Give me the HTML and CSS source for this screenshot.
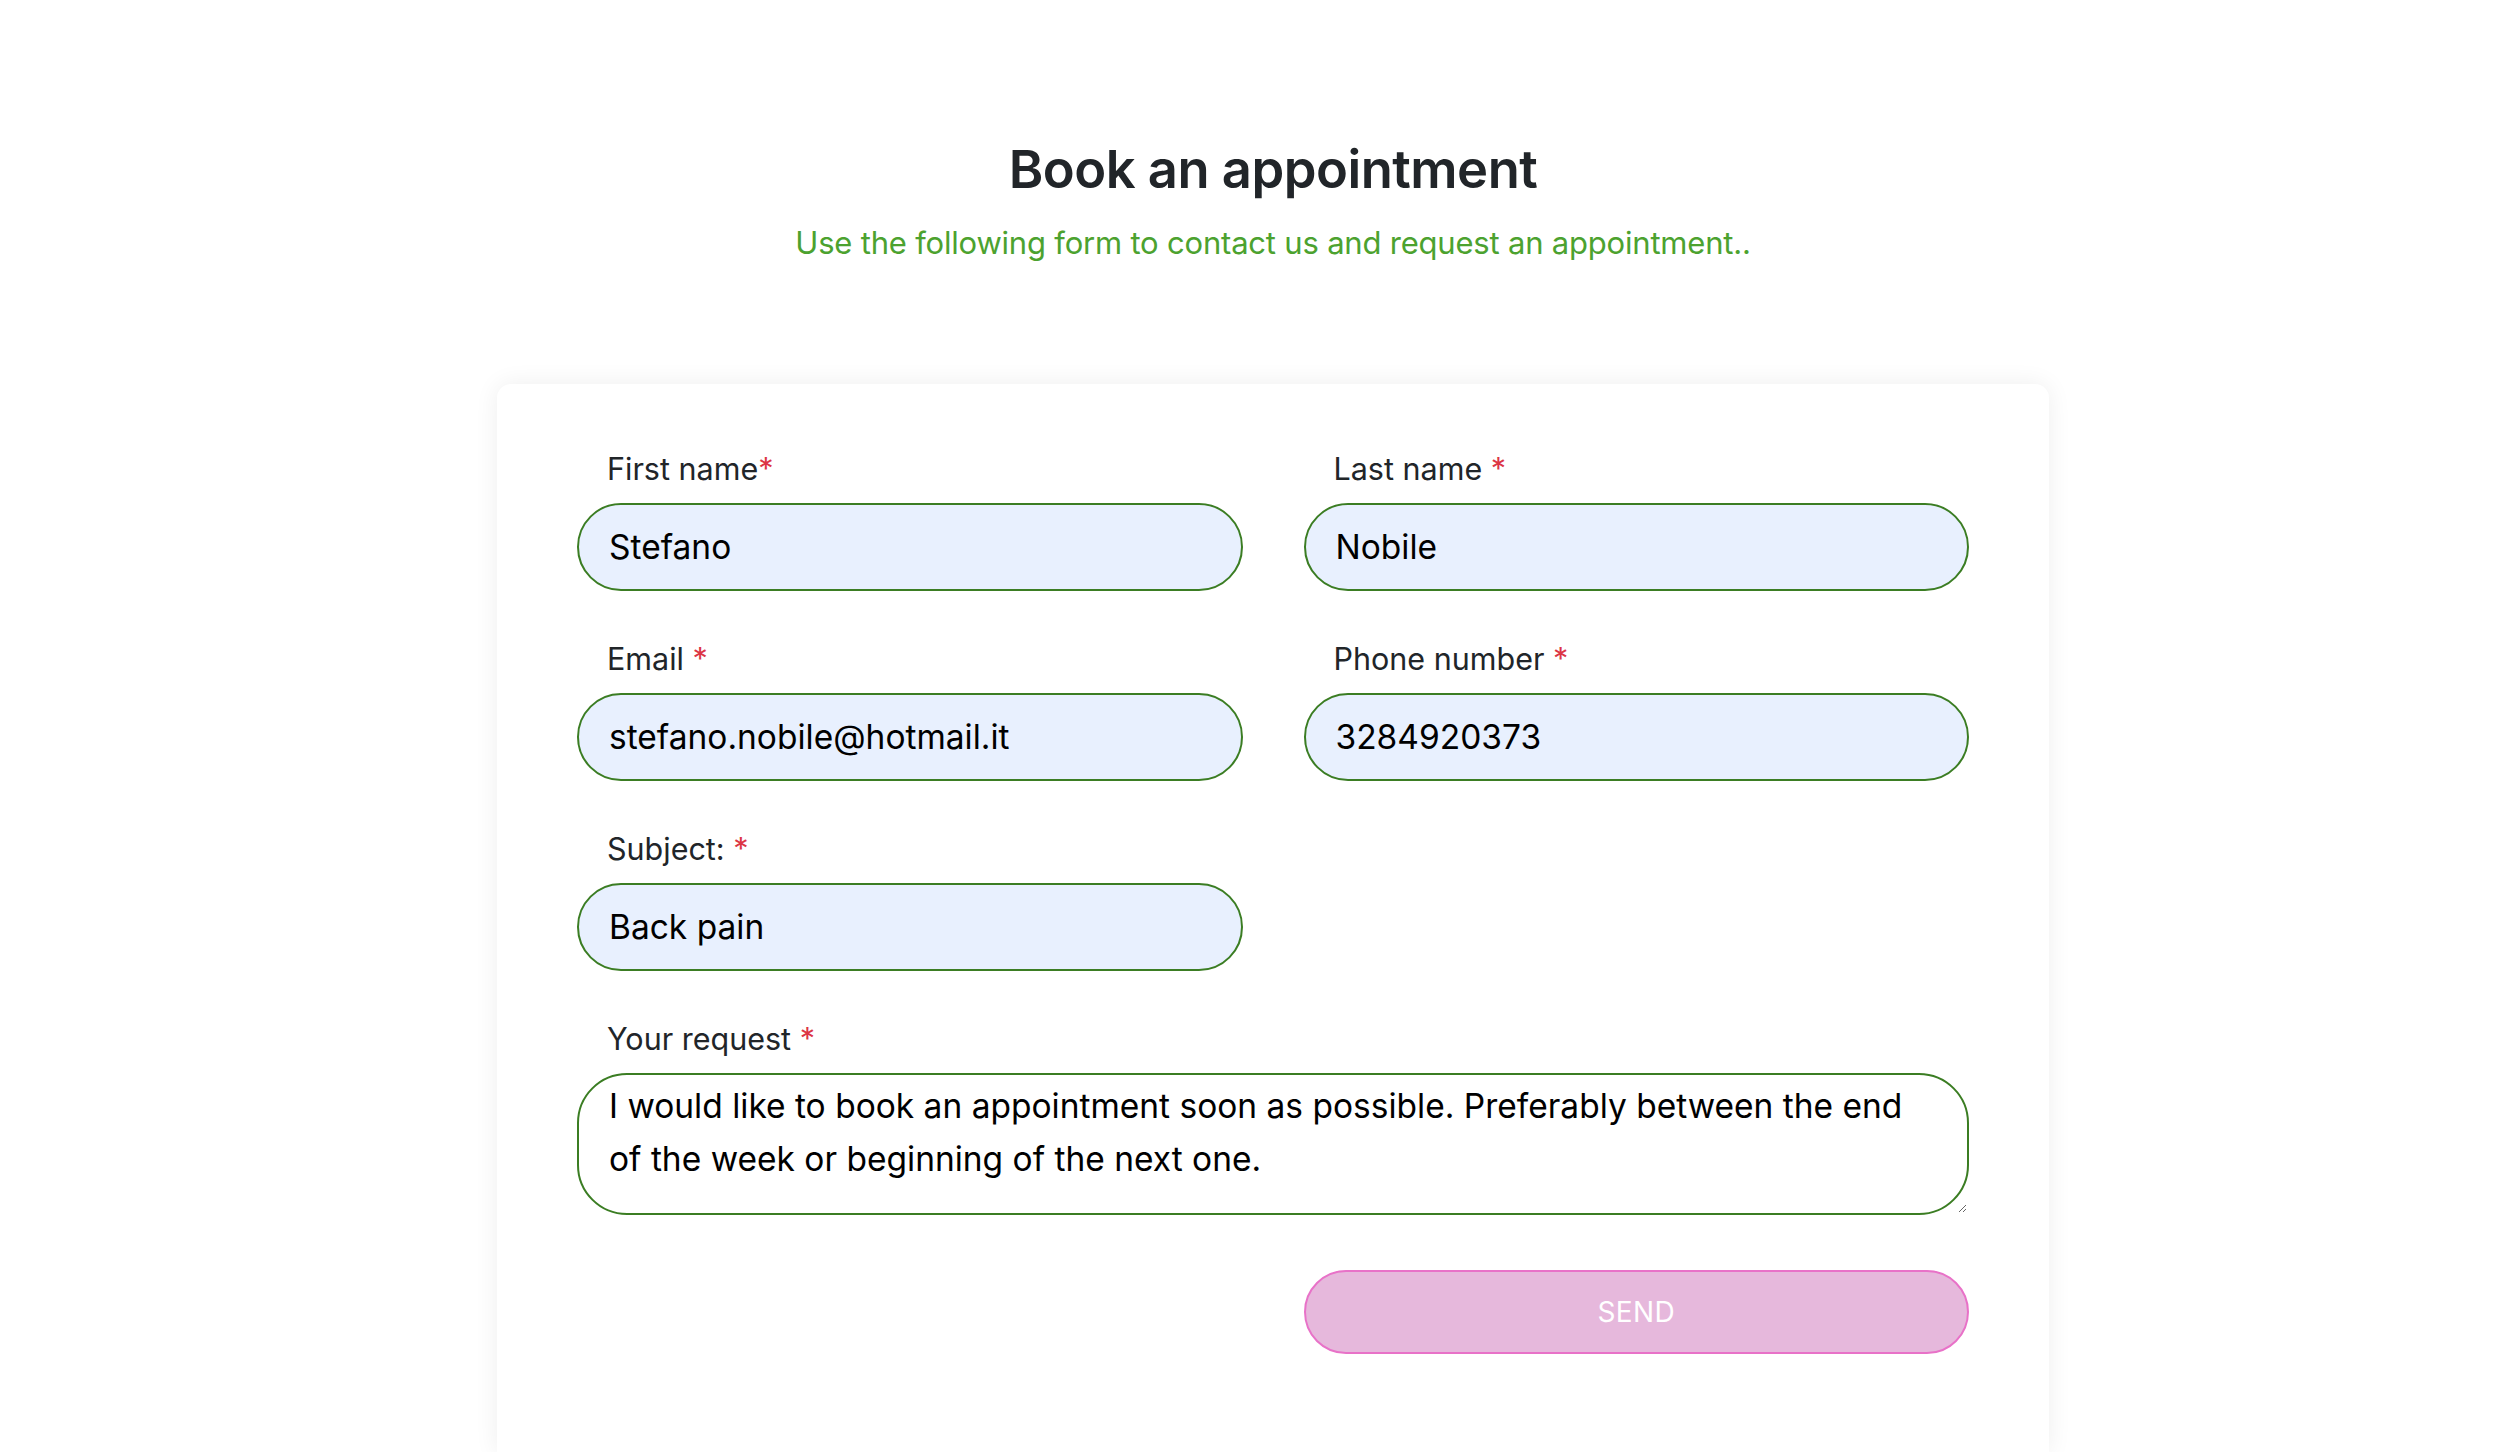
FILE: index.html
```html
<!DOCTYPE html>
<html lang="en">
<head>
<meta charset="utf-8">
<title>Book an appointment</title>
<link rel="stylesheet" href="styles.css">
</head>
<body>
<main class="page">
  <header class="intro">
    <h1 class="title">Book an appointment</h1>
    <p class="subtitle">Use the following form to contact us and request an appointment..</p>
  </header>
  <form class="card">
    <div class="grid">
      <div class="field">
        <label class="label" for="fn">First name<span class="req">*</span></label>
        <input class="input autofilled" id="fn" type="text" value="Stefano">
      </div>
      <div class="field">
        <label class="label" for="ln">Last name <span class="req">*</span></label>
        <input class="input autofilled" id="ln" type="text" value="Nobile">
      </div>
      <div class="field">
        <label class="label" for="em">Email <span class="req">*</span></label>
        <input class="input autofilled" id="em" type="text" value="stefano.nobile@hotmail.it">
      </div>
      <div class="field">
        <label class="label" for="ph">Phone number <span class="req">*</span></label>
        <input class="input autofilled" id="ph" type="text" value="3284920373">
      </div>
      <div class="field">
        <label class="label" for="sb">Subject: <span class="req">*</span></label>
        <input class="input autofilled" id="sb" type="text" value="Back pain">
      </div>
      <div class="field full">
        <label class="label" for="rq">Your request <span class="req">*</span></label>
        <textarea class="input textarea" id="rq">I would like to book an appointment soon as possible. Preferably between the end of the week or beginning of the next one.</textarea>
      </div>
      <div class="actions">
        <button class="send" type="button">SEND</button>
      </div>
    </div>
  </form>
</main>
</body>
</html>
```

FILE: styles.css
```css
* { box-sizing: border-box; }

html, body {
  margin: 0;
  background: #ffffff;
}

body {
  font-family: Inter, "Noto Sans", "Liberation Sans", sans-serif;
  color: #212529;
  padding-left: 26px;
}

.page {
  width: 1552px;
  margin: 0 auto;
}

.intro {
  text-align: center;
  padding-top: 138px;
}

.title {
  margin: 0;
  font-size: 52.5px;
  line-height: 62px;
  font-weight: 600;
  letter-spacing: -0.5px;
  color: #212529;
}

.subtitle {
  margin: 19px 0 0;
  font-size: 31px;
  line-height: 48px;
  color: #4ca22f;
  letter-spacing: -0.2px;
}

.card {
  margin-top: 117px;
  background: #fff;
  border-radius: 14px 14px 0 0;
  box-shadow: 0 0 24px rgba(0, 0, 0, 0.07);
  padding: 62px 80px 99px;
}

.grid {
  display: grid;
  grid-template-columns: 1fr 1fr;
  column-gap: 61px;
  row-gap: 45px;
}

.field {
  display: flex;
  flex-direction: column;
  gap: 12px;
}

.full { grid-column: 1 / -1; }

.actions {
  grid-column: 2;
  padding-top: 10px;
}

.label {
  display: block;
  padding-left: 30px;
  font-size: 30.5px;
  line-height: 45px;
  color: #212529;
}

.req { color: #dc3545; }

.input {
  display: block;
  width: 100%;
  height: 88px;
  border: 2px solid #3b7d23;
  border-radius: 50px;
  padding: 0 30px;
  font-family: inherit;
  font-size: 33.5px;
  color: #000;
  background: #fff;
  outline: none;
}

.autofilled { background: #e8f0fe; }

.textarea {
  height: 142px;
  padding: 5px 30px;
  line-height: 53px;
  resize: vertical;
}

.send {
  display: block;
  width: 100%;
  height: 84px;
  border: 2px solid #e872c8;
  border-radius: 50px;
  background: #e6b8dc;
  color: #fff;
  font-family: inherit;
  font-size: 28px;
  letter-spacing: 0.3px;
}
```
